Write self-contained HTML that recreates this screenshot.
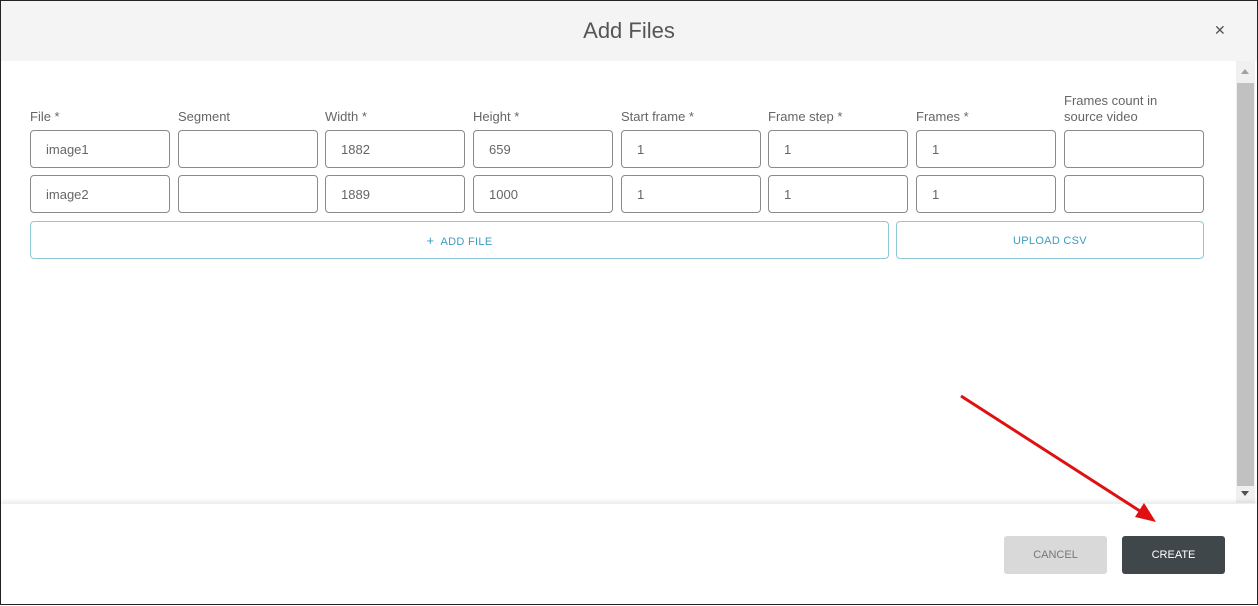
<!DOCTYPE html>
<html><head><meta charset="utf-8"><style>
*{box-sizing:border-box;margin:0;padding:0}
body{width:1258px;height:605px;overflow:hidden;background:#fff;font-family:"Liberation Sans",sans-serif;position:relative;border:1px solid #222}
.hdr{position:absolute;left:0;top:0;width:1256px;height:60px;background:#f4f4f4}
.title{position:absolute;left:0;width:1256px;top:17px;text-align:center;font-size:22px;color:#555}
.x{position:absolute;left:1213px;top:21px;font-size:14px;color:#555}
.lbl{position:absolute;font-size:13px;color:#666;line-height:16px}
.in{position:absolute;width:140px;height:38px;border:1px solid #8a8a8a;border-radius:4px;font-size:13px;color:#666;padding:11px 0 0 15px}
.btn{position:absolute;top:220px;height:38px;border:1px solid #8fc9d8;border-radius:4px;color:#3a9ec0;font-size:11px;text-align:center;line-height:38px;letter-spacing:.3px}
.sb{position:absolute;left:1235px;top:60px;width:19px;height:442px;background:#f0f0f0}
.thumb{position:absolute;left:1236px;top:82px;width:17px;height:403px;background:#c1c1c1}
.foot{position:absolute;left:0;top:503px;width:1256px;height:100px;background:#fff;box-shadow:0 -3px 4px rgba(0,0,0,.08)}
.cancel{position:absolute;left:1003px;top:535px;width:103px;height:38px;background:#d9d9d9;border-radius:3px;color:#777;font-size:11px;text-align:center;line-height:38px}
.create{position:absolute;left:1121px;top:535px;width:103px;height:38px;background:#40474b;border-radius:3px;color:#fff;font-size:11px;text-align:center;line-height:38px}
</style></head><body>
<div class="hdr"></div>
<div class="title">Add Files</div>
<div class="x">✕</div>
<div class="lbl" style="left:29px;top:108px">File *</div>
<div class="lbl" style="left:177px;top:108px">Segment</div>
<div class="lbl" style="left:324px;top:108px">Width *</div>
<div class="lbl" style="left:472px;top:108px">Height *</div>
<div class="lbl" style="left:620px;top:108px">Start frame *</div>
<div class="lbl" style="left:767px;top:108px">Frame step *</div>
<div class="lbl" style="left:915px;top:108px">Frames *</div>
<div class="lbl" style="left:1063px;top:92px">Frames count in<br>source video</div>

<div class="in" style="left:29px;top:129px">image1</div>
<div class="in" style="left:177px;top:129px"></div>
<div class="in" style="left:324px;top:129px">1882</div>
<div class="in" style="left:472px;top:129px">659</div>
<div class="in" style="left:620px;top:129px">1</div>
<div class="in" style="left:767px;top:129px">1</div>
<div class="in" style="left:915px;top:129px">1</div>
<div class="in" style="left:1063px;top:129px"></div>

<div class="in" style="left:29px;top:174px">image2</div>
<div class="in" style="left:177px;top:174px"></div>
<div class="in" style="left:324px;top:174px">1889</div>
<div class="in" style="left:472px;top:174px">1000</div>
<div class="in" style="left:620px;top:174px">1</div>
<div class="in" style="left:767px;top:174px">1</div>
<div class="in" style="left:915px;top:174px">1</div>
<div class="in" style="left:1063px;top:174px"></div>

<div class="btn" style="left:29px;width:859px"><span style="font-size:13px">+</span>&nbsp; ADD FILE</div>
<div class="btn" style="left:895px;width:308px">UPLOAD CSV</div>

<div class="sb"></div>
<div class="thumb"></div>
<div style="position:absolute;left:1240px;top:68px;width:0;height:0;border-left:4px solid transparent;border-right:4px solid transparent;border-bottom:5px solid #a0a0a0"></div>
<div style="position:absolute;left:1240px;top:490px;width:0;height:0;border-left:4px solid transparent;border-right:4px solid transparent;border-top:5px solid #505050"></div>

<div class="foot"></div>
<div class="cancel">CANCEL</div>
<div class="create">CREATE</div>

<svg style="position:absolute;left:0;top:0" width="1258" height="605">
<line x1="960" y1="395" x2="1142" y2="512" stroke="#e01010" stroke-width="3"/>
<polygon points="1155,521 1134,516 1143,502" fill="#e01010"/>
</svg>
</body></html>
